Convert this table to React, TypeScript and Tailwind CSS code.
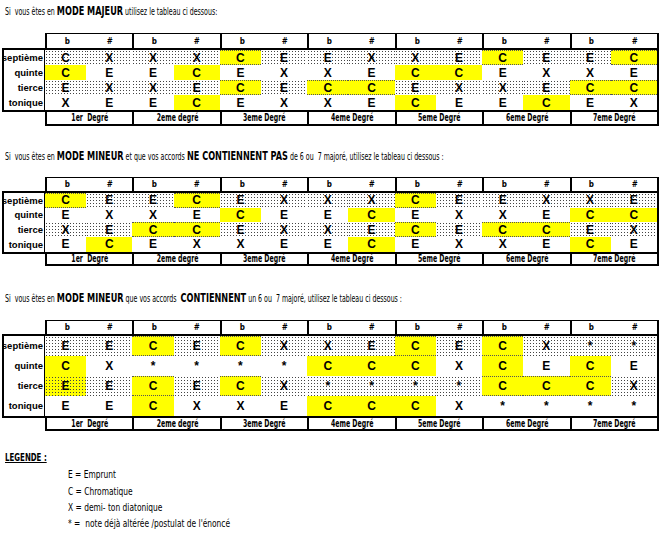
import React from "react";

const NARROW = "font-['DejaVu_Sans',sans-serif]";
const ARIAL = "font-['Liberation_Sans',Arial,sans-serif]";
const DOTS = "bg-[radial-gradient(circle,#444_0.8px,transparent_1px)] bg-[length:3px_3px]";

type Table = string[][][]; // degree -> row -> [b, #]

const T1: Table = [
  [["C", "X"], ["yC", "E"], ["E", "X"], ["X", "E"]],
  [["X", "X"], ["E", "yC"], ["X", "E"], ["E", "yC"]],
  [["yC", "E"], ["E", "X"], ["yC", "E"], ["E", "X"]],
  [["E", "X"], ["X", "E"], ["yC", "yC"], ["X", "E"]],
  [["X", "E"], ["yC", "yC"], ["E", "X"], ["yC", "E"]],
  [["yC", "E"], ["E", "X"], ["X", "E"], ["E", "yC"]],
  [["E", "yC"], ["X", "E"], ["yC", "yC"], ["E", "X"]],
];

const T2: Table = [
  [["yC", "E"], ["E", "X"], ["X", "E"], ["E", "yC"]],
  [["E", "yC"], ["X", "E"], ["yC", "yC"], ["E", "X"]],
  [["E", "X"], ["yC", "E"], ["E", "X"], ["X", "E"]],
  [["X", "X"], ["E", "yC"], ["X", "E"], ["E", "yC"]],
  [["yC", "E"], ["E", "X"], ["yC", "E"], ["E", "X"]],
  [["E", "X"], ["X", "E"], ["yC", "yC"], ["X", "E"]],
  [["X", "E"], ["yC", "yC"], ["E", "X"], ["yC", "E"]],
];

const T3: Table = [
  [["E", "E"], ["yC", "X"], ["zE", "E"], ["E", "E"]],
  [["yC", "E"], ["*", "*"], ["yC", "E"], ["yC", "X"]],
  [["yC", "X"], ["*", "*"], ["yC", "X"], ["X", "E"]],
  [["X", "E"], ["yC", "yC"], ["*", "*"], ["yC", "yC"]],
  [["yC", "E"], ["yC", "X"], ["*", "*"], ["yC", "X"]],
  [["yC", "X"], ["yC", "E"], ["yC", "yC"], ["*", "*"]],
  [["*", "*"], ["yC", "E"], ["yC", "X"], ["*", "*"]],
];

const LABELS = ["septième", "quinte", "tierce", "tonique"];
const DEGREES = ["1er  Degré", "2eme degré", "3eme Degré", "4eme Degré", "5eme Degré", "6eme Degré", "7eme Degré"];

function Cell({ v, dotted, first }: { v: string; dotted: boolean; first: boolean }) {
  const yellow = v.startsWith("y");
  const yd = v.startsWith("z");
  const txt = yellow || yd ? v.slice(1) : v;
  let bg = "";
  if (yd) bg = `bg-[#ffff00] ${DOTS}`;
  else if (yellow) bg = dotted ? "bg-[#ffff00] border-y border-dotted border-[#555]" : "bg-[#ffff00]";
  else if (dotted) bg = DOTS;
  const w = first ? "w-[47%] shrink-0" : "flex-1";
  return (
    <div className={`${w} ${bg} flex items-center justify-center text-[12px] font-bold leading-none text-black`}>
      {txt}
    </div>
  );
}

function HeaderRow({ h }: { h: string }) {
  return (
    <div className={`flex ${h}`}>
      <div className="w-[43px] shrink-0" />
      <div className="flex flex-1 border-t border-r-2 border-black">
        {DEGREES.map((d) => (
          <div key={d} className={`flex flex-1 border-l-2 border-black ${NARROW} text-[9px] font-bold leading-none`}>
            <div className="w-[47%] shrink-0 flex items-center justify-center">
              <span className="inline-block scale-x-[0.8]">b</span>
            </div>
            <div className="flex-1 flex items-center justify-center">
              <span className="inline-block scale-x-[0.8]">#</span>
            </div>
          </div>
        ))}
      </div>
    </div>
  );
}

function FooterRow({ h }: { h: string }) {
  return (
    <div className={`flex ${h}`}>
      <div className="w-[43px] shrink-0" />
      <div className="flex flex-1 border-r-2 border-b-2 border-black">
        {DEGREES.map((d) => (
          <div
            key={d}
            className={`flex flex-1 items-center justify-center border-l-2 border-black ${NARROW} text-[10px] font-bold leading-none whitespace-pre`}
          >
            <span className="inline-block scale-x-[0.62]">{d}</span>
          </div>
        ))}
      </div>
    </div>
  );
}

function Grid({ data, rowH, headH, footH }: { data: Table; rowH: string; headH: string; footH: string }) {
  return (
    <div className="ml-[2px] w-[657px] flex flex-col">
      <HeaderRow h={headH} />
      <div className="border-2 border-black flex flex-col">
        {LABELS.map((label, r) => {
          const dotted = r === 0 || r === 2;
          return (
            <div key={label} className={`flex ${rowH}`}>
              <div
                className={`w-[41px] shrink-0 border-r border-black flex items-center justify-end pr-[1px] ${ARIAL} text-[9.5px] font-bold leading-none`}
              >
                {label}
              </div>
              <div className="flex flex-1">
                {data.map((deg, di) => (
                  <div key={di} className={`flex flex-1 ${ARIAL}`}>
                    <Cell v={deg[r][0]} dotted={dotted} first />
                    <Cell v={deg[r][1]} dotted={dotted} first={false} />
                  </div>
                ))}
              </div>
            </div>
          );
        })}
      </div>
      <FooterRow h={footH} />
    </div>
  );
}

function Title({ children }: { children: React.ReactNode }) {
  return (
    <div className={`h-[20px] flex items-center pl-[5px] ${NARROW} text-[10px] text-black whitespace-pre leading-none`}>
      <span className="inline-block origin-left scale-x-[0.628]">{children}</span>
    </div>
  );
}

function B({ children }: { children: React.ReactNode }) {
  return <span className="text-[13px] font-bold">{children}</span>;
}

export default function App() {
  return (
    <div className="w-[661px] h-[533px] bg-white overflow-hidden">
      <div className="flex flex-col">
        <Title>
          {"Si  vous êtes en "}
          <B>MODE MAJEUR</B>
          {" utilisez le tableau ci dessous:"}
        </Title>
        <div className="mt-[13px]">
          <Grid data={T1} rowH="h-[15px]" headH="h-[15px]" footH="h-[14px]" />
        </div>
        <div className="mt-[19px]">
          <Title>
            {"Si  vous êtes en "}
            <B>MODE MINEUR</B>
            {" et que vos accords "}
            <B>NE CONTIENNENT PAS</B>
            {" de 6 ou  7 majoré, utilisez le tableau ci dessous :"}
          </Title>
        </div>
        <div className="mt-[12px]">
          <Grid data={T2} rowH="h-[14.67px]" headH="h-[14px]" footH="h-[12.5px]" />
        </div>
        <div className="mt-[21px]">
          <Title>
            {"Si  vous êtes en "}
            <B>MODE MINEUR</B>
            {" que vos accords  "}
            <B>CONTIENNENT</B>
            {" un 6 ou  7 majoré, utilisez le tableau ci dessous :"}
          </Title>
        </div>
        <div className="mt-[13px]">
          <Grid data={T3} rowH="h-[20px]" headH="h-[14px]" footH="h-[13px]" />
        </div>
        <div className={`mt-[18px] h-[16px] flex items-center pl-[5px] ${NARROW} text-[11px] font-bold leading-none`}>
          <span className="inline-block origin-left scale-x-[0.64] underline">LEGENDE :</span>
        </div>
        <div className={`mt-[2px] pl-[68px] flex flex-col ${NARROW} text-[11px] leading-[16.4px] whitespace-pre text-black`}>
          <div><span className="inline-block origin-left scale-x-[0.68]">E = Emprunt</span></div>
          <div><span className="inline-block origin-left scale-x-[0.68]">C = Chromatique</span></div>
          <div><span className="inline-block origin-left scale-x-[0.68]">X = demi- ton diatonique</span></div>
          <div><span className="inline-block origin-left scale-x-[0.68]">{"* =  note déjà altérée /postulat de l'énoncé"}</span></div>
        </div>
      </div>
    </div>
  );
}
